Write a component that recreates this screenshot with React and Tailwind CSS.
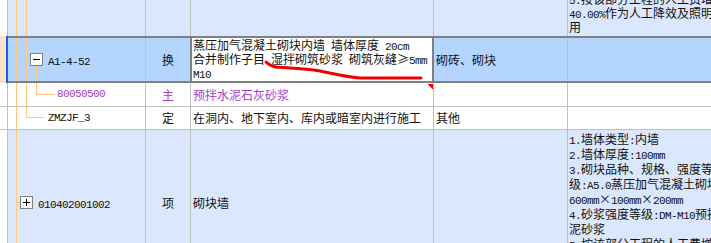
import React from 'react';

// ascii runs are half-width, like the bitmap song font of the grid
function Mix({ text }) {
  const parts = text.split(/([\x20-\x7e]+)/).filter(Boolean);
  return parts.map((p, i) =>
    /^[\x20-\x7e]+$/.test(p) ? (
      <span key={i} className="font-['Liberation_Mono',monospace] text-[11px] leading-none tracking-[-0.6px] whitespace-pre">{p}</span>
    ) : (
      <span key={i}>{p}</span>
    )
  );
}

function TreeBox({ open }) {
  return (
    <span className="relative flex h-[13px] w-[13px] shrink-0 items-center justify-center border border-[#808080] bg-white">
      <span className="h-px w-[7px] bg-black" />
      {!open && <span className="absolute h-[7px] w-px bg-black" />}
    </span>
  );
}

const spec = [
  '1.墙体类型:内墙',
  '2.墙体厚度:100mm',
  '3.砌块品种、规格、强度等',
  '级:A5.0蒸压加气混凝土砌块',
  '600mm×100mm×200mm',
  '4.砂浆强度等级:DM-M10预拌水',
  '泥砂浆',
  '5.按该部分工程的人工费增加',
  '40.00%作为人工降效及照明费',
  '用',
];

export default function App() {
  return (
    <div className="relative h-[243px] w-[711px] overflow-hidden bg-white font-['Noto_Sans_CJK_SC','Noto_Sans',sans-serif] text-[12px] text-[#111]">
      {/* row above, only its tail is visible */}
      <div className="flex h-[36px]">
        <div className="w-[8px] shrink-0 border-r border-[#c0c0c0] bg-white" />
        <div className="w-[138px] shrink-0 border-r border-[#c0c0c0] bg-[#dbe7fc]" />
        <div className="w-[45px] shrink-0 border-r border-[#c0c0c0] bg-[#dbe7fc]" />
        <div className="w-[243px] shrink-0 border-r border-[#c0c0c0] bg-[#dbe7fc]" />
        <div className="w-[134px] shrink-0 border-r border-[#c0c0c0] bg-[#dbe7fc]" />
        <div className="flex min-w-0 flex-1 flex-col justify-end overflow-hidden whitespace-nowrap bg-[#dbe7fc] pb-[2px] pl-[1px] leading-[14px]">
          <div className="h-[14px] shrink-0"><Mix text="5.按该部分工程的人工费增加" /></div>
          <div className="h-[14px] shrink-0"><Mix text="40.00%作为人工降效及照明费" /></div>
          <div className="h-[14px] shrink-0">用</div>
        </div>
      </div>

      {/* selected row */}
      <div className="flex h-[47px]">
        <div className="w-[8px] shrink-0 border-r-2 border-[#1a5cf0] bg-[#fde3c3]" />
        <div className="flex flex-1 border-y-2 border-[#808080] bg-[#b4d5fd]">
          <div className="flex w-[138px] shrink-0 items-center border-r border-[#c0c0c0] pl-[22px]">
            <TreeBox open />
            <span className="ml-[5px]"><Mix text="A1-4-52" /></span>
          </div>
          <div className="flex w-[44px] shrink-0 items-center justify-center">换</div>
          <div className="w-[244px] shrink-0 overflow-hidden whitespace-nowrap border-x-2 border-[#808080] bg-white pl-[1px] leading-[14px]">
            <div className="h-[14px]"><Mix text="蒸压加气混凝土砌块内墙 墙体厚度 20cm" /></div>
            <div className="h-[14px]"><Mix text="合并制作子目 湿拌砌筑砂浆 砌筑灰缝≥5mm" /></div>
            <div className="h-[14px]"><Mix text="M10" /></div>
          </div>
          <div className="flex w-[134px] shrink-0 items-center border-r border-[#c0c0c0] pl-[2px]">砌砖、砌块</div>
          <div className="flex-1" />
        </div>
      </div>

      {/* material row */}
      <div className="flex h-[24px] border-b border-[#c0c0c0] bg-white text-[#a640c8]">
        <div className="w-[8px] shrink-0 border-r border-[#c0c0c0]" />
        <div className="flex w-[138px] shrink-0 items-center border-r border-[#c0c0c0] pl-[49px]">
          <Mix text="80050500" />
        </div>
        <div className="flex w-[45px] shrink-0 items-center justify-center border-r border-[#c0c0c0]">主</div>
        <div className="flex w-[243px] shrink-0 items-center border-r border-[#c0c0c0] pl-[2px]">预拌水泥石灰砂浆</div>
        <div className="w-[134px] shrink-0 border-r border-[#c0c0c0]" />
        <div className="flex-1" />
      </div>

      {/* fixed-rate row */}
      <div className="flex h-[23px] border-b border-[#c0c0c0] bg-white">
        <div className="w-[8px] shrink-0 border-r border-[#c0c0c0]" />
        <div className="flex w-[138px] shrink-0 items-center border-r border-[#c0c0c0] pl-[40px]">
          <Mix text="ZMZJF_3" />
        </div>
        <div className="flex w-[45px] shrink-0 items-center justify-center border-r border-[#c0c0c0]">定</div>
        <div className="flex w-[243px] shrink-0 items-center whitespace-nowrap border-r border-[#c0c0c0] pl-[2px]">
          在洞内、地下室内、库内或暗室内进行施工
        </div>
        <div className="flex w-[134px] shrink-0 items-center border-r border-[#c0c0c0] pl-[2px]">其他</div>
        <div className="flex-1" />
      </div>

      {/* next bill item */}
      <div className="flex h-[145px]">
        <div className="w-[8px] shrink-0 border-r border-[#c0c0c0] bg-white" />
        <div className="flex w-[138px] shrink-0 items-center border-r border-[#c0c0c0] bg-[#dbe7fc] pl-[12px]">
          <TreeBox />
          <span className="ml-[5px]"><Mix text="010402001002" /></span>
        </div>
        <div className="flex w-[45px] shrink-0 items-center justify-center border-r border-[#c0c0c0] bg-[#dbe7fc]">项</div>
        <div className="flex w-[243px] shrink-0 items-center border-r border-[#c0c0c0] bg-[#dbe7fc] pl-[2px]">砌块墙</div>
        <div className="w-[134px] shrink-0 border-r border-[#c0c0c0] bg-[#dbe7fc]" />
        <div className="min-w-0 flex-1 overflow-hidden whitespace-nowrap bg-[#dbe7fc] pl-[1px] pt-[1px] leading-[15px]">
          {spec.map((s) => (
            <div key={s} className="h-[15px]"><Mix text={s} /></div>
          ))}
        </div>
      </div>

      {/* tree connectors, pen mark and comment flag */}
      <svg className="pointer-events-none absolute left-0 top-0" width="711" height="243" shapeRendering="crispEdges">
        <g stroke="#ffc97d" strokeWidth="1">
          <line x1="16.5" y1="0" x2="16.5" y2="36" />
          <line x1="16.5" y1="38" x2="16.5" y2="81" />
          <line x1="16.5" y1="83" x2="16.5" y2="243" />
          <line x1="26.5" y1="0" x2="26.5" y2="36" />
          <line x1="26.5" y1="38" x2="26.5" y2="81" />
          <line x1="26.5" y1="83" x2="26.5" y2="118" />
          <line x1="26" y1="117.5" x2="44" y2="117.5" />
          <line x1="36.5" y1="66" x2="36.5" y2="81" />
          <line x1="36.5" y1="83" x2="36.5" y2="95" />
          <line x1="36" y1="94.5" x2="55" y2="94.5" />
          <line x1="16" y1="202.5" x2="20" y2="202.5" />
        </g>
        <path
          d="M266 62 C268 64 270 66 276 67 C290 68 305 68 320 71 C335 74 345 77 360 78 L421 78"
          fill="none"
          stroke="#f00000"
          strokeWidth="3"
          strokeLinecap="round"
          shapeRendering="auto"
        />
        <polygon points="427,84 433,84 433,90" fill="#f00000" />
      </svg>
    </div>
  );
}
